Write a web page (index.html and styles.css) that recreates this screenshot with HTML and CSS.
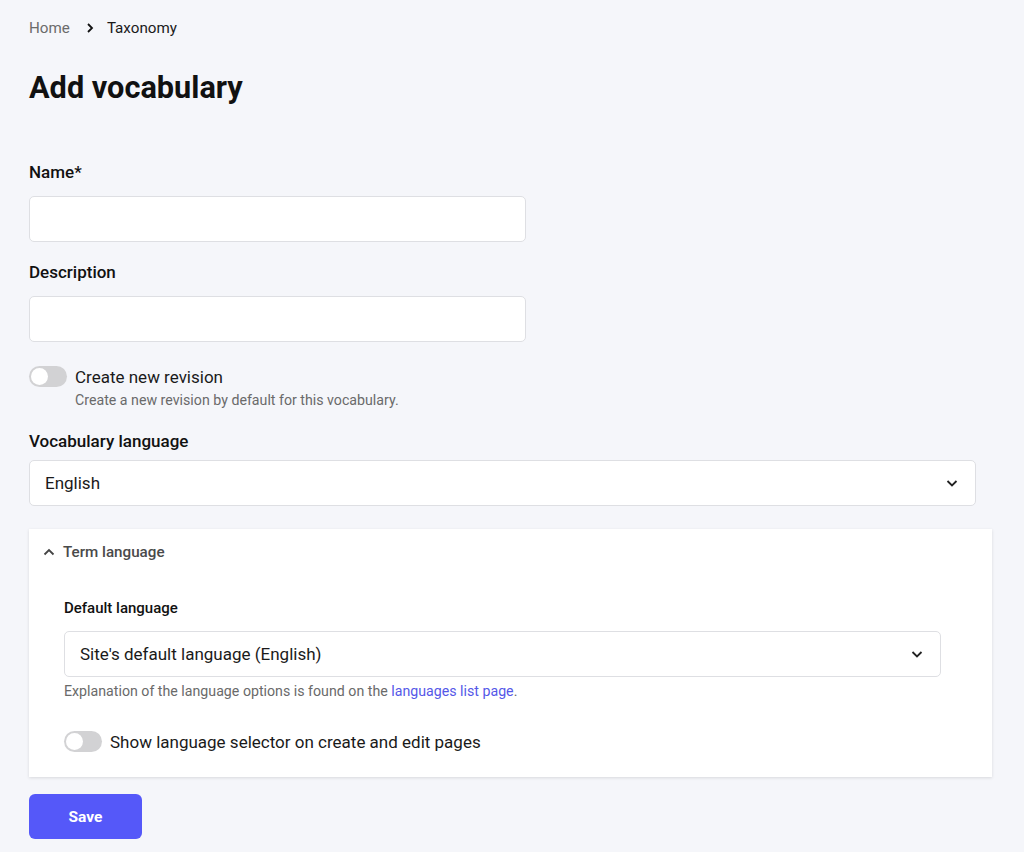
FILE: index.html
```html
<!DOCTYPE html>
<html lang="en">
  <head>
    <meta charset="UTF-8" />
    <meta name="viewport" content="width=device-width, initial-scale=1.0" />
    <title>Add vocabulary</title>
    <link rel="stylesheet" href="styles.css">
  </head>
  <body>
    <nav class="breadcrumb">
      <a href="#">Home</a>
      <svg class="crumb-sep" width="12" height="12" viewBox="0 0 12 12"><path d="M4 2l4 4-4 4" fill="none" stroke="#111" stroke-width="1.8"/></svg>
      <span>Taxonomy</span>
    </nav>
    <h1>Add vocabulary</h1>

    <form class="vocab-form" action="">
      <div class="field">
        <label for="name">Name*</label>
        <input type="text" id="name" class="text-input" />
      </div>
      <div class="field">
        <label for="description">Description</label>
        <input type="text" id="description" class="text-input" />
      </div>

      <div class="switch-field">
        <div class="switch-row">
          <span class="switch"></span>
          <span class="switch-label">Create new revision</span>
        </div>
        <p class="help">Create a new revision by default for this vocabulary.</p>
      </div>

      <div class="field field-select">
        <label>Vocabulary language</label>
        <div class="select select-wide">
          <span>English</span>
          <svg width="14" height="14" viewBox="0 0 14 14"><path d="M2.5 5l4.5 4.5L11.5 5" fill="none" stroke="#222" stroke-width="1.8"/></svg>
        </div>
      </div>

      <section class="details">
        <div class="summary">
          <svg width="14" height="14" viewBox="0 0 14 14"><path d="M2.5 9.5L7 5l4.5 4.5" fill="none" stroke="#444" stroke-width="1.8"/></svg>
          <span>Term language</span>
        </div>
        <div class="details-body">
          <label class="sub-label">Default language</label>
          <div class="select select-inner">
            <span>Site's default language (English)</span>
            <svg width="14" height="14" viewBox="0 0 14 14"><path d="M2.5 5l4.5 4.5L11.5 5" fill="none" stroke="#222" stroke-width="1.8"/></svg>
          </div>
          <p class="help">Explanation of the language options is found on the <a href="#">languages list page</a>.</p>
          <div class="switch-row switch-lang">
            <span class="switch"></span>
            <span class="switch-label">Show language selector on create and edit pages</span>
          </div>
        </div>
      </section>

      <button type="submit" class="save">Save</button>
    </form>
  </body>
</html>
```

FILE: styles.css
```css
*,
*::before,
*::after {
  box-sizing: border-box;
  margin: 0;
  padding: 0;
}
body {
  font-family: Roboto, "Liberation Sans", sans-serif;
  background: #f5f6fa;
  color: #1a1a1a;
  padding: 17px 29px 0;
  min-height: 852px;
}
.breadcrumb {
  display: flex;
  align-items: center;
  font-size: 15.2px;
  height: 22px;
}
.breadcrumb a {
  color: #6b6b6b;
  text-decoration: none;
}
.crumb-sep {
  margin: 0 11px 0 14px;
}
h1 {
  font-size: 30.7px;
  font-weight: 700;
  margin-top: 29px;
  line-height: 40px;
  color: #111;
}
.vocab-form {
  margin-top: 52px;
}
.field label,
.sub-label {
  display: block;
  font-size: 17px;
  font-weight: 500;
  line-height: 24px;
  margin-bottom: 12px;
  color: #111;
}
.field {
  margin-bottom: 18px;
}
.field-select label {
  margin-bottom: 7px;
}
.text-input {
  display: block;
  width: 497px;
  height: 46px;
  border: 1px solid #dedfe3;
  border-radius: 5px;
  background: #fff;
  font: inherit;
}
.switch-field {
  margin-top: 24px;
  margin-bottom: 19px;
}
.switch-row {
  display: flex;
  align-items: center;
  gap: 8px;
}
.switch {
  width: 38px;
  height: 21px;
  border-radius: 999px;
  background: #d2d2d4;
  position: relative;
  flex-shrink: 0;
}
.switch::after {
  content: "";
  position: absolute;
  left: 2px;
  top: 2px;
  width: 17px;
  height: 17px;
  border-radius: 50%;
  background: #fff;
}
.switch-label {
  font-size: 17px;
  color: #1a1a1a;
}
.help {
  font-size: 14.2px;
  color: #6a6a6a;
  line-height: 20px;
}
.switch-field .help {
  margin-left: 46px;
  margin-top: 3px;
}
.select {
  display: flex;
  align-items: center;
  justify-content: space-between;
  height: 46px;
  background: #fff;
  border: 1px solid #dedfe3;
  border-radius: 5px;
  font-size: 17px;
  color: #1a1a1a;
  padding: 0 16px 0 15px;
}
.select-wide {
  width: 947px;
}
.details {
  width: 963px;
  background: #fff;
  box-shadow: 0 1px 3px rgba(0, 0, 0, 0.12);
  margin-top: 23px;
  padding-bottom: 25px;
}
.summary {
  display: flex;
  align-items: center;
  gap: 7px;
  height: 46px;
  padding-left: 13px;
  font-size: 15.2px;
  font-weight: 500;
  color: #4a4a4a;
}
.details-body {
  padding: 21px 0 0 35px;
}
.sub-label {
  font-size: 15px;
  margin-bottom: 11px;
}
.select-inner {
  width: 877px;
}
.details-body .help {
  margin-top: 4px;
}
.help a {
  color: #5558e8;
  text-decoration: none;
}
.switch-lang {
  margin-top: 30px;
}
.save {
  display: block;
  margin-top: 17px;
  width: 113px;
  height: 45px;
  border: none;
  border-radius: 6px;
  background: #5558f9;
  color: #fff;
  font-family: inherit;
  font-size: 15.5px;
  font-weight: 700;
  cursor: pointer;
}
```
